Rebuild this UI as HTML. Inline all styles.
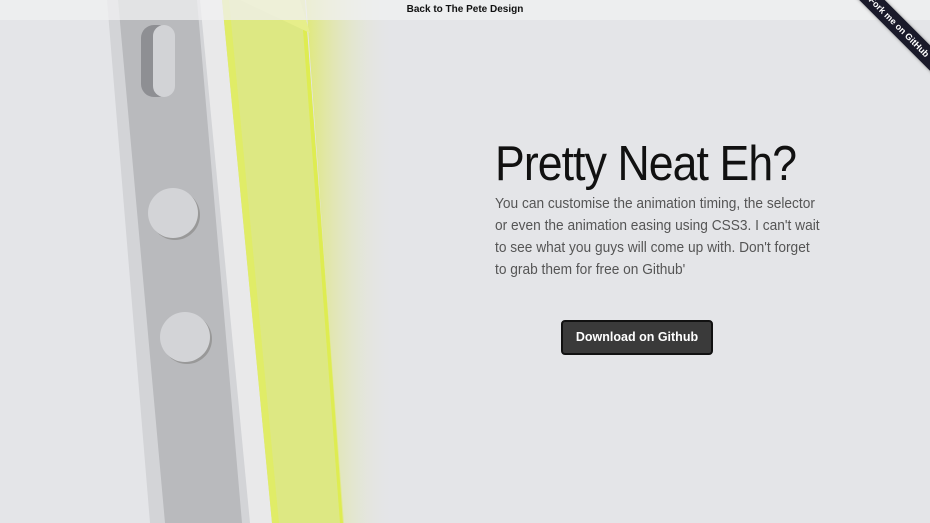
<!DOCTYPE html>
<html><head><meta charset="utf-8"><style>
html,body{margin:0;padding:0;width:930px;height:523px;overflow:hidden;background:#e4e5e8;font-family:"Liberation Sans",sans-serif;}
.bar{position:absolute;left:0;top:0;width:930px;height:20px;background:rgba(240,240,242,0.75);text-align:center;font-size:10px;font-weight:bold;line-height:20px;color:#111;z-index:3}
svg.phone{position:absolute;left:0;top:0}
h1{position:absolute;left:495px;top:136px;margin:0;font-weight:normal;font-size:49px;letter-spacing:-1px;color:#111;white-space:nowrap;line-height:56px;transform:scaleX(0.91);transform-origin:0 0}
p{position:absolute;left:495px;top:193px;margin:0;font-size:15px;line-height:22px;color:#555;white-space:nowrap;transform:scaleX(0.915);transform-origin:0 0}
.btn{position:absolute;left:561px;top:320px;width:148px;height:31px;background:#3a3a3a;border:2px solid #111;border-radius:4px;color:#fff;font-weight:bold;font-size:12.5px;text-align:center;line-height:31px}
.ribbon{position:absolute;right:-54px;top:18px;width:170px;height:18px;background:#1a1a2a;transform:rotate(45deg);color:#fff;font-size:9px;font-weight:bold;text-align:center;line-height:18px;z-index:4;box-shadow:0 0 3px #888}
</style></head><body>
<svg class="phone" width="930" height="523">
<defs>
<linearGradient id="fade" x1="0" x2="1"><stop offset="0" stop-color="#dfe87a"/><stop offset="1" stop-color="#e4e5e8" stop-opacity="0"/></linearGradient>
</defs>
<polygon points="107,0 225,0 275,523 150,523" fill="#d3d4d7"/>
<polygon points="118,0 197,0 242,523 165,523" fill="#b9babd"/>
<polygon points="200,0 222,0 272,523 250,523" fill="#e9e9ea"/>
<polygon points="222,0 305,0 343,523 272,523" fill="#dde883"/>
<polygon points="222,0 229,0 279,523 272,523" fill="#e2ee55" opacity="0.6"/>
<polygon points="303,30 307,30 344,523 340,523" fill="#e0ee30" opacity="0.6"/>
<polygon points="306,0 390,0 395,523 343,523" fill="url(#fade)"/>
<polygon points="240,0 300,0 310,33" fill="#e6ee8a"/>
<rect x="141" y="25" width="30" height="72" rx="13" fill="#8e8f93"/>
<rect x="153" y="25" width="22" height="72" rx="11" fill="#d2d3d6"/>
<circle cx="175" cy="215" r="25" fill="#999"/>
<circle cx="173" cy="213" r="25" fill="#d3d4d7"/>
<circle cx="187" cy="339" r="25" fill="#999"/>
<circle cx="185" cy="337" r="25" fill="#d3d4d7"/>
</svg>
<div class="bar">Back to The Pete Design</div>
<div class="ribbon">Fork me on GitHub</div>
<h1>Pretty Neat Eh?</h1>
<p>You can customise the animation timing, the selector<br>or even the animation easing using CSS3. I can't wait<br>to see what you guys will come up with. Don't forget<br>to grab them for free on Github'</p>
<div class="btn">Download on Github</div>
</body></html>
